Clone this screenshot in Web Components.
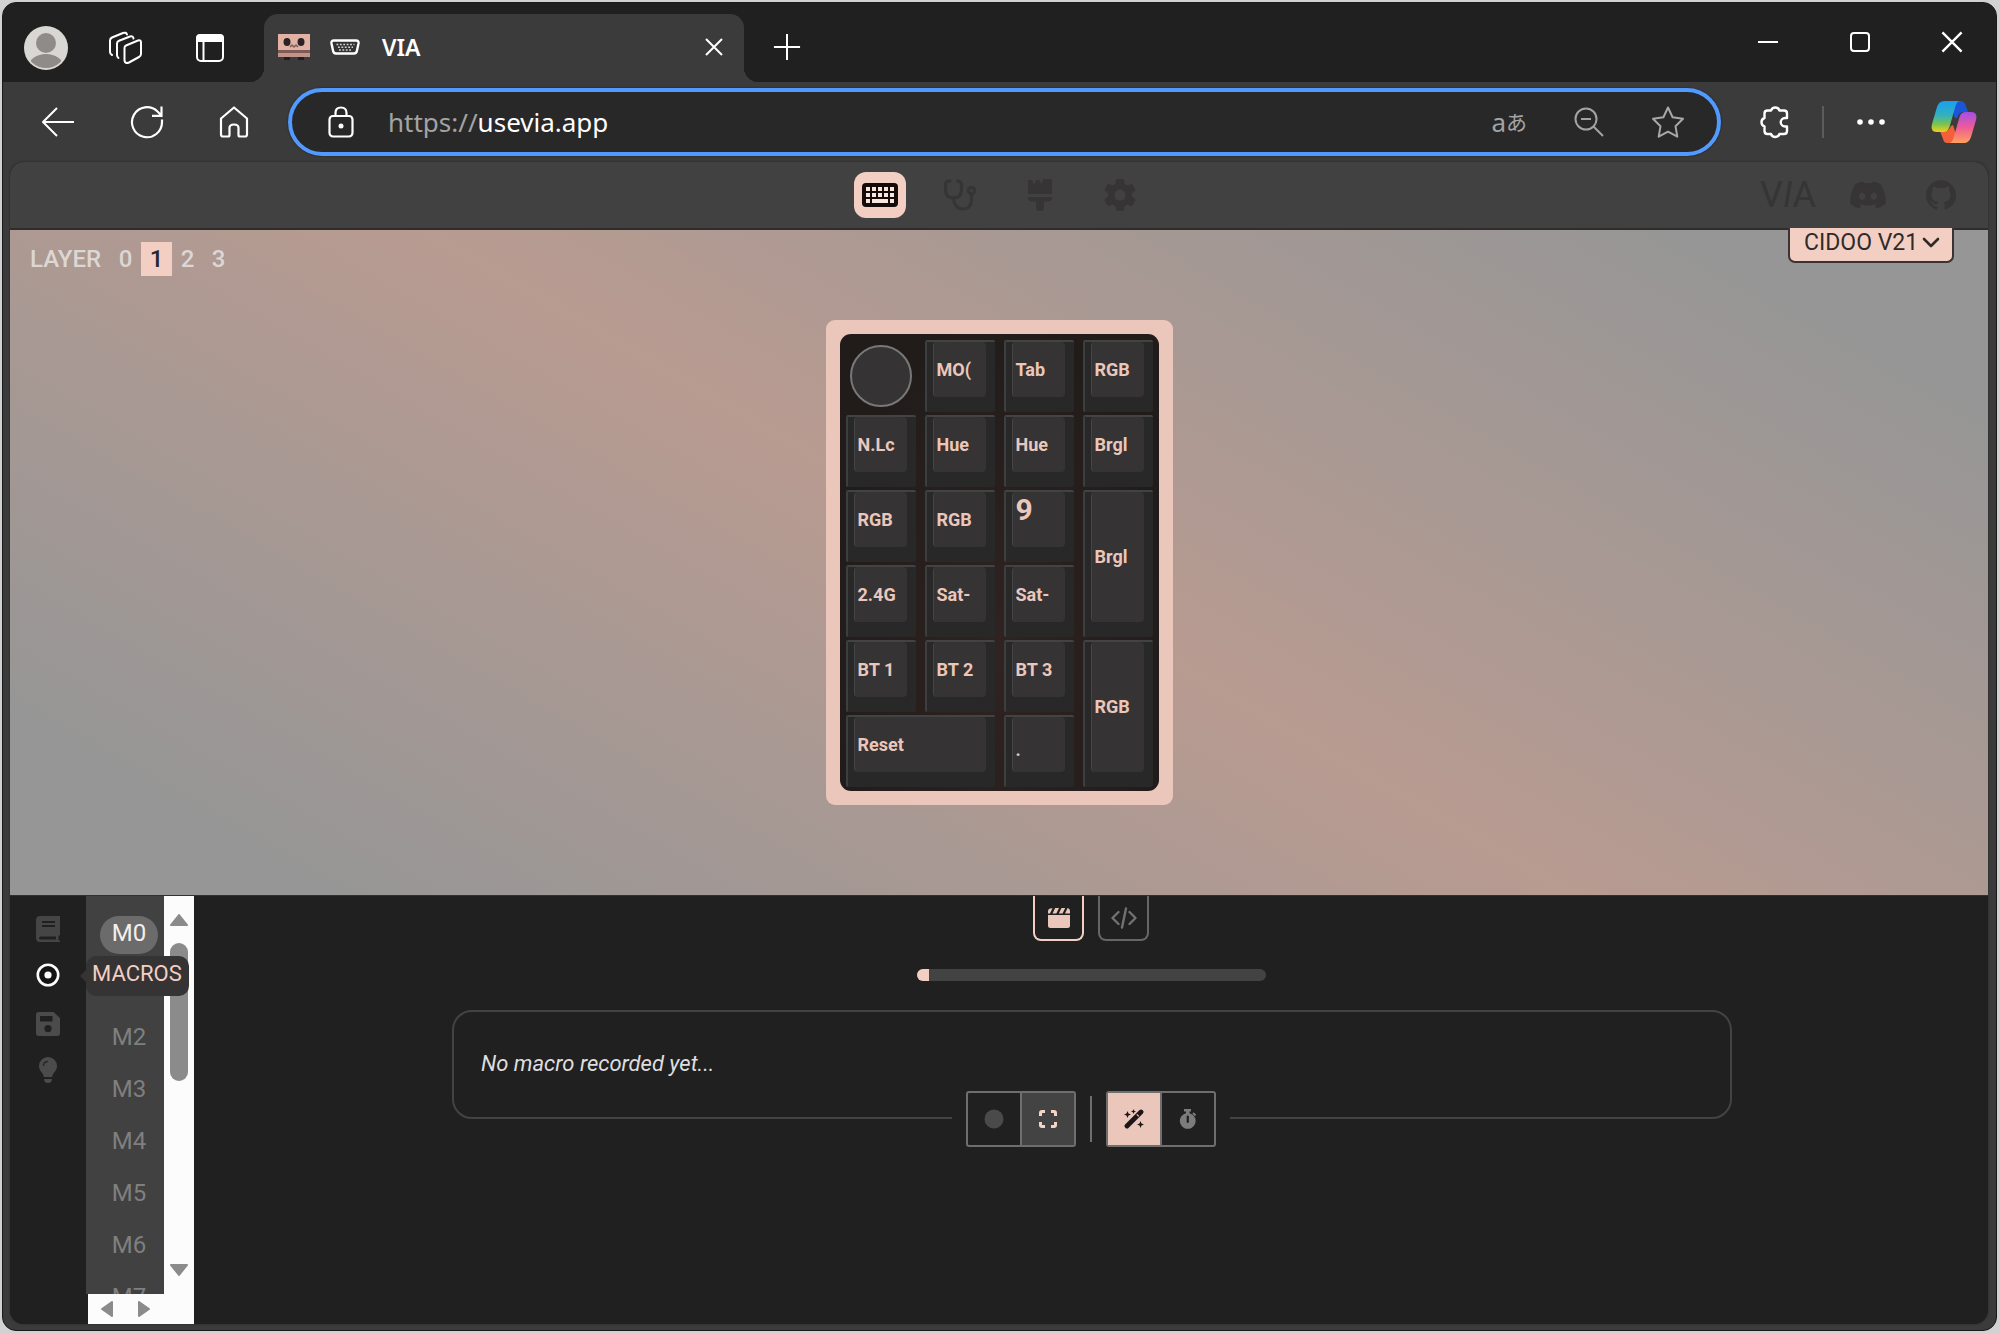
<!DOCTYPE html>
<html lang="en">
<head>
<meta charset="utf-8">
<title>VIA</title>
<style>
  html, body { height: 100%; margin: 0; background: #d2d2d2; }
  body {
    box-sizing: border-box; padding: 2px 3px 3px 2px;
    font-family: Roboto, "Noto Sans", "Noto Sans CJK JP", sans-serif;
    font-size: 24px; line-height: 28px; color: #fff;
    --accent: #ebc7bb; --accent-hi: #f3cfc3; --panel: #414141; --deep: #202020; --dim: #363435;
  }
</style>
</head>
<body>
<browser-window>
  <tab-strip slot="tabs"></tab-strip>
  <address-row slot="address"></address-row>
  <via-app>
    <via-header slot="header"></via-header>
    <keyboard-stage slot="stage"></keyboard-stage>
    <rail-menu slot="panel"></rail-menu>
    <macro-list slot="panel"></macro-list>
    <macro-editor slot="panel"></macro-editor>
  </via-app>
</browser-window>

<script>
const ICONS = {
  avatar: ['0 0 44 44', '<circle cx="22" cy="22" r="22" fill="#d9d7d3"/><clipPath id="a"><circle cx="22" cy="22" r="20"/></clipPath><g fill="#8f8b88" clip-path="url(#a)"><circle cx="22" cy="17" r="10"/><ellipse cx="22" cy="40" rx="17" ry="12"/></g>'],
  workspaces: ['0 0 34 34', '<g fill="none" stroke="#fff" stroke-width="2" stroke-linejoin="round" stroke-linecap="round"><path d="M17 14.500L29 9.500Q32 8.500 32 11.500V23Q32 25 30 26L20 31.500Q16 33 15.500 29.500V17Q15.500 15 17 14.500Z"/><path d="M9.500 27Q8 26 8 24V12.500Q8 10.500 10 9.800L21 5.500Q24 4.500 24.500 7.500"/><path d="M3 24Q1 23 1 21V9.500Q1 7.500 3 6.500L14 2Q17 .800 18 3.500"/></g>'],
  verticalTabs: ['0 0 30 30', '<rect x="2" y="2" width="26" height="26" rx="4" fill="none" stroke="#fff" stroke-width="2"/><path d="M1 9V5Q1 1 5 1H25Q29 1 29 5V9Z" fill="#fff"/><path d="M8.500 9V28" stroke="#fff" stroke-width="2"/>'],
  favicon: ['0 0 32 26', '<rect width="32" height="17" fill="#e3b2a5"/><rect y="16" width="32" height="7" fill="#7d5a58"/><rect x="0" y="19" width="32" height="4" fill="#c39288"/><ellipse cx="9" cy="8" rx="3.500" ry="4" fill="#2a2224"/><ellipse cx="23" cy="8" rx="3.500" ry="4" fill="#2a2224"/><path d="M12 13L14 11L16 13L18 11L20 13" fill="none" stroke="#80605a" stroke-width="1.500"/><path d="M6 23H12V26H6ZM20 23H26V26H20Z" fill="#211c1e"/>'],
  port: ['0 0 30 16', '<path d="M4 1.500H26Q29 1.500 28.500 4.500L27 11.500Q26.500 14.500 24 14.500H6Q3.500 14.500 3 11.500L1.500 4.500Q1 1.500 4 1.500Z" fill="#333" stroke="#fff" stroke-width="2.400"/><path d="M6.500 5.500H24.500M8 8.200H23M9 11H22" stroke="#d5d5d5" stroke-width="1.500" stroke-dasharray="1.800 1.600"/>'],
  close: ['0 0 20 20', '<path d="M2 2L18 18M18 2L2 18" stroke="#fff" stroke-width="2"/>'],
  plus: ['0 0 30 30', '<path d="M15 1V29M1 15H29" stroke="#fff" stroke-width="2.200"/>'],
  minimise: ['0 0 24 24', '<path d="M2 12H22" stroke="#fff" stroke-width="2"/>'],
  maximise: ['0 0 24 24', '<rect x="3" y="3" width="18" height="18" rx="3" fill="none" stroke="#fff" stroke-width="2"/>'],
  back: ['0 0 34 30', '<path d="M33 15H2M16 1L2 15L16 29" fill="none" stroke="#fff" stroke-width="2" stroke-linejoin="round"/>'],
  reload: ['0 0 34 34', '<path d="M32 14.500V17A15 15 0 1 1 27.500 6.500L31.500 10.500M31.500 1.500V10.800H22" fill="none" stroke="#fff" stroke-width="2.200"/>'],
  home: ['0 0 30 32', '<path d="M2 12.500L15 1.500L28 12.500V28.500Q28 30.500 26 30.500H21Q19.500 30.500 19.500 29V22Q19.500 18.500 15 18.500T10.500 22V29Q10.500 30.500 9 30.500H4Q2 30.500 2 28.500Z" fill="none" stroke="#fff" stroke-width="2.200" stroke-linejoin="round"/>'],
  lock: ['0 0 26 32', '<rect x="1.500" y="10" width="23" height="20.500" rx="3.500" fill="none" stroke="#fff" stroke-width="2.200"/><path d="M7.500 10V7Q7.500 1.500 13 1.500T18.500 7V10" fill="none" stroke="#fff" stroke-width="2.200"/><circle cx="13" cy="20" r="2.500" fill="#fff"/>'],
  zoomOut: ['0 0 30 30', '<g fill="none" stroke="#a3a3a3" stroke-width="2"><circle cx="12" cy="12" r="10.500"/><path d="M19.500 19.500L29 29M7 12H17"/></g>'],
  star: ['0 0 34 34', '<path d="M17 2.500L21.600 12.200L32 13.700L24.500 21.200L26.300 31.700L17 26.700L7.700 31.700L9.500 21.200L2 13.700L12.400 12.200Z" fill="none" stroke="#a8a8a8" stroke-width="2" stroke-linejoin="round"/>'],
  puzzle: ['0 0 32 34', '<path d="M12 5.500A4.500 4.500 0 0 1 20.500 5.500H25Q28 5.500 28 8.500V13H26A4.200 4.200 0 0 0 26 21.500H28V26Q28 29 25 29H20.500A4.500 4.500 0 0 1 12 29H8.500Q5.500 29 5.500 26V21.500A4.500 4.500 0 0 1 5.500 13V8.500Q5.500 5.500 8.500 5.500Z" fill="none" stroke="#fff" stroke-width="2.400" stroke-linejoin="round"/>'],
  more: ['0 0 28 6', '<g fill="#fff"><circle cx="3" cy="3" r="2.800"/><circle cx="14" cy="3" r="2.800"/><circle cx="25" cy="3" r="2.800"/></g>'],
  copilot: ['0 0 46 44', '<defs><linearGradient id="b" x2="0" y2="1"><stop stop-color="#1b9ff0"/><stop offset=".45" stop-color="#31b0c0"/><stop offset=".75" stop-color="#7cc250"/><stop offset="1" stop-color="#f3d018"/></linearGradient><linearGradient id="c" x2="0" y2="1"><stop stop-color="#a44dea"/><stop offset=".5" stop-color="#ee5c96"/><stop offset="1" stop-color="#ffa05c"/></linearGradient></defs><path d="M24 1H30Q33 1 34.500 5L37 12H32Q28 12 26 18L24 18L20 6Z" fill="#1c56d8"/><path d="M22 43H16Q13 43 12 39L9 31H14Q18 31 20 26L22 25L26 38Z" fill="#f2603c"/><path d="M13 1H29Q26 1 24.500 6L18.500 27Q17 32 12 32H6Q-1 32 1 24L6 7Q8 1 13 1Z" fill="url(#b)"/><path d="M33 43H18Q21 43 22.500 38L28.500 17Q30 12 35 12H40Q47 12 45 20L40 37Q38 43 33 43Z" fill="url(#c)"/>'],
  keyboard: ['0 0 36 24', '<rect width="36" height="24" rx="4" fill="#150b0a"/><path d="M4 6H8M10 6H14M16 6H20M22 6H26M28 6H32M4 12H8M10 12H14M16 12H20M22 12H26M28 12H32M4 18H8M10 18H26M28 18H32" stroke="#fbe6de" stroke-width="4"/>'],
  stethoscope: ['0 0 34 32', '<g fill="none" stroke="currentColor" stroke-width="3.200" stroke-linecap="round"><path d="M7 2Q2.500 2 2.500 6V10Q2.500 19 10.500 19T18.500 10V6Q18.500 2 14.500 2"/><path d="M10.500 19V20Q12 30 20 30T28.500 21V15"/><circle cx="28.500" cy="11.500" r="3.200"/></g>'],
  brush: ['0 0 24 32', '<path d="M0 1H4L6 6L8 1H11L13.500 5L15.500 0H22Q24 0 24 2V15H0ZM0 18H24V19Q24 22.500 20 22.500H16V28.500Q16 32 12 32T8 28.500V22.500H4Q0 22.500 0 19Z" fill="currentColor"/>'],
  gear: ['2 2 20 20', '<path fill="currentColor" d="M19.430 12.980c.04-.32.07-.64.07-.98s-.03-.66-.07-.98l2.110-1.650c.19-.15.24-.42.12-.64l-2-3.460c-.12-.22-.39-.3-.61-.22l-2.490 1c-.52-.4-1.080-.73-1.690-.98l-.38-2.650C14.460 2.180 14.250 2 14 2h-4c-.25 0-.46.18-.49.42l-.38 2.650c-.61.25-1.170.59-1.690.98l-2.490-1c-.23-.09-.49 0-.61.22l-2 3.460c-.13.22-.07.49.12.64l2.110 1.650c-.04.32-.07.65-.07.98s.03.66.07.98l-2.110 1.650c-.19.15-.24.42-.12.64l2 3.460c.12.22.39.3.61.22l2.490-1c.52.4 1.080.73 1.690.98l.38 2.650c.03.24.24.42.49.42h4c.25 0 .46-.18.49-.42l.38-2.650c.61-.25 1.170-.59 1.690-.98l2.490 1c.23.09.49 0 .61-.22l2-3.460c.12-.22.07-.49-.12-.64l-2.110-1.650zM12 15.500c-1.930 0-3.500-1.570-3.500-3.500s1.570-3.500 3.500-3.500 3.500 1.570 3.500 3.500-1.570 3.500-3.500 3.500z"/>'],
  discord: ['0 2.500 24 19', '<path fill="currentColor" d="M20.317 4.370a19.791 19.791 0 00-4.885-1.515.074.074 0 00-.079.037c-.211.375-.445.865-.608 1.250-1.845-.276-3.680-.276-5.487 0-.164-.393-.406-.874-.618-1.250a.077.077 0 00-.079-.037 19.736 19.736 0 00-4.885 1.515.070.070 0 00-.032.028C.533 9.046-.319 13.580.099 18.058a.082.082 0 00.031.056c2.053 1.508 4.041 2.423 5.993 3.029a.078.078 0 00.084-.028c.462-.630.873-1.295 1.226-1.994a.076.076 0 00-.042-.106c-.653-.248-1.274-.550-1.872-.892a.077.077 0 01-.008-.128c.126-.094.252-.192.372-.291a.074.074 0 01.078-.011c3.928 1.793 8.180 1.793 12.061 0a.074.074 0 01.079.010c.120.099.246.198.373.292a.077.077 0 01-.007.128 12.299 12.299 0 01-1.873.891.077.077 0 00-.041.107c.360.698.772 1.363 1.225 1.993a.076.076 0 00.084.029c1.961-.607 3.950-1.522 6.002-3.029a.077.077 0 00.031-.055c.500-5.177-.838-9.674-3.549-13.660a.061.061 0 00-.031-.029zM8.020 15.331c-1.183 0-2.157-1.086-2.157-2.419 0-1.333.956-2.419 2.157-2.419 1.211 0 2.176 1.095 2.157 2.419 0 1.333-.956 2.419-2.157 2.419zm7.975 0c-1.183 0-2.157-1.086-2.157-2.419 0-1.333.955-2.419 2.157-2.419 1.211 0 2.176 1.095 2.157 2.419 0 1.333-.946 2.419-2.157 2.419z"/>'],
  github: ['0 0 24 24', '<path fill="currentColor" d="M12 .297c-6.630 0-12 5.373-12 12 0 5.303 3.438 9.800 8.205 11.385.6.113.82-.258.82-.577 0-.285-.01-1.040-.015-2.040-3.338.724-4.042-1.610-4.042-1.610C4.422 18.070 3.633 17.700 3.633 17.700c-1.087-.744.084-.729.084-.729 1.205.084 1.838 1.236 1.838 1.236 1.070 1.835 2.809 1.305 3.495.998.108-.776.417-1.305.76-1.605-2.665-.3-5.466-1.332-5.466-5.930 0-1.310.465-2.380 1.235-3.220-.135-.303-.54-1.523.105-3.176 0 0 1.005-.322 3.300 1.230.96-.267 1.980-.399 3-.405 1.020.006 2.040.138 3 .405 2.280-1.552 3.285-1.230 3.285-1.230.645 1.653.24 2.873.12 3.176.765.84 1.230 1.910 1.230 3.220 0 4.610-2.805 5.625-5.475 5.920.42.36.81 1.096.81 2.220 0 1.606-.015 2.896-.015 3.286 0 .315.21.69.825.57C20.565 22.092 24 17.592 24 12.297c0-6.627-5.373-12-12-12"/>'],
  chevron: ['0 0 18 11', '<path d="M2 2L9 9L16 2" fill="none" stroke="#302a2b" stroke-width="2.600" stroke-linecap="round" stroke-linejoin="round"/>'],
  book: ['0 0 24 26', '<path fill="#454545" fill-rule="evenodd" d="M4 0H24V19L22.500 20V24L24 25V26H4Q0 26 0 22V4Q0 0 4 0ZM6 5V7H19V5ZM6 9V11H19V9ZM5 20.500Q3 20.500 3 22T5 23.500H20V20.500Z"/>'],
  record: ['0 0 24 24', '<circle cx="12" cy="12" r="10.200" fill="#141414" stroke="#fff" stroke-width="2.600"/><circle cx="12" cy="12" r="3.600" fill="#fff"/>'],
  save: ['0 0 24 24', '<path fill="#4b4b4b" fill-rule="evenodd" d="M3 0H17.500L24 6V21Q24 24 21 24H3Q0 24 0 21V3Q0 0 3 0ZM4 4V9.500H16.500V4ZM12 13A3.600 3.600 0 1 0 12 20.200A3.600 3.600 0 1 0 12 13Z"/>'],
  bulb: ['0 0 18 26', '<path fill="#4b4b4b" d="M9 0A9 9 0 0 1 18 9C18 14 14 15.500 13 20H5C4 15.500 0 14 0 9A9 9 0 0 1 9 0ZM5 22H13Q13 26 9 26T5 22Z"/><path d="M4.500 9Q4.500 4.500 9 4.500" fill="none" stroke="#2a2a2a" stroke-width="1.600"/>'],
  clapper: ['0 0 22 20', '<path d="M0 7H22V17.500Q22 20 19.500 20H2.500Q0 20 0 17.500Z" fill="#ebc7bb"/><path d="M0 5.500V3Q0 1 2 .5L4.500 .2L2 5.500ZM4.500 5.500L7.200 0H11L8.300 5.500ZM10.800 5.500L13.500 0H17.200L14.500 5.500ZM17 5.500L19.600 0Q22 .5 22 3V5.500Z" fill="#ebc7bb"/>'],
  code: ['0 0 26 22', '<path d="M7.500 5L1.500 11L7.500 17M18.500 5L24.500 11L18.500 17M15 1.500L11 20.500" fill="none" stroke="#717171" stroke-width="2.400" stroke-linecap="round" stroke-linejoin="round"/>'],
  dot: ['0 0 20 20', '<circle cx="10" cy="10" r="9.500" fill="#4a4a4a"/>'],
  expand: ['0 0 18 18', '<path d="M1.500 6V3Q1.500 1.500 3 1.500H6M12 1.500H15Q16.500 1.500 16.500 3V6M16.500 12V15Q16.500 16.500 15 16.500H12M6 16.500H3Q1.500 16.500 1.500 15V12" fill="none" stroke="#f6d3c7" stroke-width="3"/>'],
  wand: ['0 0 20 20', '<path d="M3 17L17 3" stroke="#1d1517" stroke-width="4.800" stroke-linecap="round"/><path d="M12.800 5.400L14.800 7.400" stroke="#ebc7bb" stroke-width="1.200"/><path d="M3.500 2L4.500 4.500L7 5.500L4.500 6.500L3.500 9L2.500 6.500L0 5.500L2.500 4.500ZM9.500 0L10.200 1.800L12 2.500L10.200 3.200L9.500 5L8.800 3.200L7 2.500L8.800 1.800ZM16.500 12L17.500 14.500L20 15.500L17.500 16.500L16.500 19L15.500 16.500L13 15.500L15.500 14.500Z" fill="#1d1517"/>'],
  timer: ['0 0 18 20', '<path d="M5 0H12V2.500H10.500V4.200A7.900 7.900 0 1 1 7 4.200V2.500H5Z" fill="#7c7c7c"/><path d="M14 4L16.500 6.500" stroke="#7c7c7c" stroke-width="2"/><path d="M8.800 7.500V13" stroke="#202020" stroke-width="2.200" stroke-linecap="round"/>'],
  up: ['0 0 18 12', '<path d="M9 1L17 11H1Z" fill="#8b8b8b" stroke="#8b8b8b" stroke-width="2" stroke-linejoin="round"/>'],
  down: ['0 0 18 12', '<path d="M9 11L17 1H1Z" fill="#8b8b8b" stroke="#8b8b8b" stroke-width="2" stroke-linejoin="round"/>'],
  left: ['0 0 12 16', '<path d="M1 8L11 1V15Z" fill="#8b8b8b" stroke="#8b8b8b" stroke-width="2" stroke-linejoin="round"/>'],
  right: ['0 0 12 16', '<path d="M11 8L1 1V15Z" fill="#8b8b8b" stroke="#8b8b8b" stroke-width="2" stroke-linejoin="round"/>']
};

const RESET = `
  :host { box-sizing: border-box; }
  * { box-sizing: border-box; }
  button { appearance: none; border: 0; padding: 0; margin: 0; background: none; color: inherit; font: inherit; display: flex; align-items: center; justify-content: center; }
  a { color: inherit; text-decoration: none; display: flex; align-items: center; }
`;

function define(name, css, html) {
  customElements.define(name, class extends HTMLElement {
    constructor() {
      super();
      const markup = typeof html === 'function' ? html(this) : html;
      this.attachShadow({ mode: 'open' }).innerHTML = `<style>${RESET}${css}</style>${markup}`;
    }
  });
}

define('ui-icon', ':host { display: block; flex: none; } svg { display: block; }', el => {
  const [box, body] = ICONS[el.getAttribute('name')];
  return `<svg viewBox="${box}" width="${el.getAttribute('w')}" height="${el.getAttribute('h')}" aria-hidden="true">${body}</svg>`;
});

const icon = (name, w, h) => `<ui-icon name="${name}" w="${w}" h="${h}"></ui-icon>`;

define('browser-window', `
  :host { display: flex; flex-direction: column; height: 100%; background: #3b3b3b; border-radius: 14px; overflow: hidden; border: 1px solid #1a1a1a; }
`, '<slot name="tabs"></slot><slot name="address"></slot><slot></slot>');

define('tab-strip', `
  :host { display: flex; align-items: stretch; height: 79px; background: var(--deep); flex: none; }
  .tools { display: flex; align-items: center; padding: 10px 39px 0 21px; }
  .tools button { margin-right: 41px; }
  .tools button + button { margin-right: 52px; }
  .tools button + button + button { margin-right: 0; }
  .tab { width: 480px; margin-top: 11px; background: #3b3b3b; border-radius: 14px 14px 0 0; display: flex; align-items: center; padding: 0 20px 2px 14px; position: relative; }
  .tab::before, .tab::after { content: ""; position: absolute; bottom: 0; width: 14px; height: 14px; }
  .tab::before { right: 100%; background: radial-gradient(circle at 0 0, transparent 14px, #3b3b3b 14px); }
  .tab::after { left: 100%; background: radial-gradient(circle at 100% 0, transparent 14px, #3b3b3b 14px); }
  .tab ui-icon + ui-icon { margin: 0 22px 0 20px; }
  .title { flex: 1; font: 600 23px/30px "Noto Sans", sans-serif; }
  .new { padding: 8px 0 0 29px; }
  .win { margin-left: auto; display: flex; gap: 68px; padding: 0 32px 2px 0; }
`, `
  <div class="tools">
    <button aria-label="Profile">${icon('avatar', 44, 44)}</button>
    <button aria-label="Workspaces">${icon('workspaces', 34, 34)}</button>
    <button aria-label="Tab actions">${icon('verticalTabs', 30, 30)}</button>
  </div>
  <div class="tab">${icon('favicon', 32, 26)}${icon('port', 30, 16)}<span class="title">VIA</span><button aria-label="Close tab">${icon('close', 20, 20)}</button></div>
  <button class="new" aria-label="New tab">${icon('plus', 28, 28)}</button>
  <div class="win">
    <button aria-label="Minimise">${icon('minimise', 24, 24)}</button>
    <button aria-label="Maximise">${icon('maximise', 24, 24)}</button>
    <button aria-label="Close">${icon('close', 24, 24)}</button>
  </div>
`);

define('address-row', `
  :host { display: flex; align-items: center; height: 80px; padding: 0 19px 0 38px; flex: none; }
  .nav { display: flex; gap: 55px; margin-right: 39px; }
  .bar { flex: 1; height: 68px; border: 4px solid #519aff; border-radius: 34px; background: #282828; display: flex; align-items: center; padding: 0 32px 0 36px; color: #a3a3a3; font: 26px/34px "Noto Sans", "Noto Sans CJK JP", sans-serif; box-shadow: 0 0 2px #251d10; }
  label { margin-left: 34px; }
  input { flex: 1; min-width: 0; border: 0; outline: 0; padding: 0; background: none; color: #fff; font: inherit; }
  .acts { display: flex; gap: 47px; align-items: center; }
  .tr { font-size: 26px; }
  .tr small { font-size: 21px; }
  .ext { margin-left: 38px; }
  .sep { width: 2px; height: 32px; background: #5c5c5c; margin: 0 33px 0 31px; }
  .cop { margin-left: 46px; }
`, `
  <div class="nav">
    <button aria-label="Back">${icon('back', 34, 30)}</button>
    <button aria-label="Reload">${icon('reload', 34, 34)}</button>
    <button aria-label="Home">${icon('home', 30, 32)}</button>
  </div>
  <div class="bar">
    ${icon('lock', 26, 32)}
    <label for="url">https://</label><input id="url" value="usevia.app" spellcheck="false">
    <div class="acts">
      <button class="tr" aria-label="Translate">a<small>あ</small></button>
      <button aria-label="Zoom out">${icon('zoomOut', 30, 30)}</button>
      <button aria-label="Add to favourites">${icon('star', 34, 34)}</button>
    </div>
  </div>
  <button class="ext" aria-label="Extensions">${icon('puzzle', 32, 34)}</button>
  <span class="sep"></span>
  <button aria-label="More">${icon('more', 28, 6)}</button>
  <button class="cop" aria-label="Copilot">${icon('copilot', 46, 44)}</button>
`);

define('via-app', `
  :host { display: flex; flex-direction: column; flex: 1; min-height: 0; margin: 0 8px 6px 7px; border-radius: 14px; overflow: hidden; background: var(--deep); box-shadow: 0 0 2px #222; }
  .panel { display: flex; flex: 1; min-height: 0; border-top: 1px solid #303030; }
`, '<slot name="header"></slot><slot name="stage"></slot><div class="panel"><slot name="panel"></slot></div>');

define('via-header', `
  :host { display: grid; grid-template-columns: 1fr auto 1fr; align-items: center; height: 68px; padding-right: 32px; background: var(--panel); border-bottom: 2px solid #302c2b; color: var(--dim); flex: none; }
  nav { grid-column: 2; display: flex; gap: 28px; padding-left: 34px; }
  nav button { width: 52px; height: 46px; border-radius: 12px; }
  .on { background: var(--accent-hi); }
  .links { justify-self: end; display: flex; align-items: center; gap: 40px; }
  .logo { font-size: 36px; line-height: 36px; margin-right: -6px; }
`, `
  <nav>
    <button class="on" aria-label="Configure">${icon('keyboard', 36, 24)}</button>
    <button aria-label="Key tester">${icon('stethoscope', 34, 32)}</button>
    <button aria-label="Design">${icon('brush', 24, 32)}</button>
    <button aria-label="Settings">${icon('gear', 32, 32)}</button>
  </nav>
  <div class="links">
    <a class="logo" href="#via">V<i>I</i>A</a>
    <a href="#discord" aria-label="Discord">${icon('discord', 36, 28)}</a>
    <a href="#github" aria-label="GitHub">${icon('github', 30, 30)}</a>
  </div>
`);

define('key-cap', `
  :host { display: block; padding: 0 9px 15px 6px; background: #282828; border-top: 2px solid #424444; border-left: 2px solid #3c3f3f; border-radius: 2px; color: var(--accent); font-size: 18px; line-height: 24px; font-weight: 700; min-width: 0; }
  :host([wide]) { grid-column: span 2; }
  :host([tall]) { grid-row: span 2; }
  button { width: 100%; height: 100%; background: #353334; border-radius: 4px; border-left: 1px solid #454545; padding-left: 3px; justify-content: flex-start; overflow: hidden; white-space: nowrap; }
  :host([big]) button { font-size: 30px; align-items: flex-start; line-height: 36px; }
  :host([low]) button { align-items: flex-end; padding-bottom: 10px; }
`, '<button><slot></slot></button>');

define('keyboard-stage', `
  :host { display: grid; grid-template-columns: 1fr auto 1fr; align-items: start; flex: none; background: linear-gradient(30deg, #969696 10%, #b89b91 50%, #969696 90%); }
  .layers { display: flex; align-items: center; padding: 12px 0 0 20px; color: #dcd7d4; height: 46px; font-weight: 500; }
  .layers span { margin-right: 9px; }
  .layers button { width: 31px; height: 34px; }
  .layers .on { background: var(--accent-hi); color: #2b2526; }
  .case { margin: 90px 0; padding: 14px; border-radius: 9px; background: var(--accent); }
  .plate { display: grid; grid-template-columns: repeat(4, 70px); grid-template-rows: repeat(6, 72px); gap: 3px 9px; padding: 6px 6px 4px 6px; border-radius: 11px; background: radial-gradient(ellipse at 50% 70%, #302321, #211c1a 75%); }
  .knob { width: 62px; height: 62px; border-radius: 50%; border: 2px solid #77787a; background: #353334; align-self: center; justify-self: center; }
  .device { justify-self: end; margin: -2px 34px 0 0; display: grid; align-items: center; }
  .device > * { grid-area: 1 / 1; }
  select { appearance: none; width: 166px; height: 35px; border: 2px solid #3a3233; border-top: 0; border-radius: 0 0 7px 7px; background: var(--accent-hi); color: #302a2b; font: inherit; font-size: 23px; line-height: 28px; padding: 0 0 4px 14px; margin: 0; }
  .device ui-icon { justify-self: end; margin: 0 14px 6px 0; pointer-events: none; }
`, `
  <div class="layers"><span>LAYER</span><button>0</button><button class="on">1</button><button>2</button><button>3</button></div>
  <div class="case"><div class="plate">
    <button class="knob" aria-label="Encoder"></button><key-cap>MO(</key-cap><key-cap>Tab</key-cap><key-cap>RGB</key-cap>
    <key-cap>N.Lc</key-cap><key-cap>Hue</key-cap><key-cap>Hue</key-cap><key-cap>Brgl</key-cap>
    <key-cap>RGB</key-cap><key-cap>RGB</key-cap><key-cap big>9</key-cap><key-cap tall>Brgl</key-cap>
    <key-cap>2.4G</key-cap><key-cap>Sat-</key-cap><key-cap>Sat-</key-cap>
    <key-cap>BT 1</key-cap><key-cap>BT 2</key-cap><key-cap>BT 3</key-cap><key-cap tall>RGB</key-cap>
    <key-cap wide>Reset</key-cap><key-cap low>.</key-cap>
  </div></div>
  <div class="device"><select aria-label="Keyboard"><option>CIDOO V21</option></select>${icon('chevron', 18, 11)}</div>
`);

define('rail-menu', `
  :host { display: block; width: 76px; padding-top: 10px; flex: none; background: var(--deep); position: relative; z-index: 1; }
  button { width: 100%; height: 46px; }
  .item { position: relative; margin-bottom: 3px; }
  .tip { position: absolute; left: 76px; top: 4px; height: 40px; padding: 0 7px 4px 6px; display: flex; align-items: center; border-radius: 10px; background: #353334; color: var(--accent-hi); font-size: 22px; }
  .tip::before { content: ""; position: absolute; right: 100%; top: 14px; border: 6px solid transparent; border-left-width: 0; border-right-color: #353334; }
`, `
  <button aria-label="Keymap">${icon('book', 24, 26)}</button>
  <div class="item"><button aria-label="Macros">${icon('record', 24, 24)}</button><span class="tip" role="tooltip">MACROS</span></div>
  <button aria-label="Save and load">${icon('save', 24, 24)}</button>
  <button aria-label="Lighting">${icon('bulb', 18, 26)}</button>
`);

define('macro-list', `
  :host { display: grid; grid-template-columns: 78px 30px; grid-template-rows: minmax(0, 1fr) 30px; flex: none; }
  .list { background: var(--panel); overflow: hidden; display: flex; flex-direction: column; gap: 14px; padding: 20px 0 0 14px; color: #7f7f7f; }
  .list button { width: 58px; height: 38px; border-radius: 19px; flex: none; padding-bottom: 4px; }
  .list .on { background: #6b6b6b; color: #f4efec; }
  .v, .h { background: #fcfcfc; display: flex; align-items: center; }
  .v { flex-direction: column; padding: 18px 0; }
  .thumb { width: 18px; height: 138px; border-radius: 9px; background: #8b8b8b; margin: 17px 0 auto; }
  .h { grid-column: 1 / 3; margin-left: 2px; gap: 25px; padding-left: 13px; }
`, `
  <div class="list"><button class="on">M0</button><button aria-label="M1"></button><button>M2</button><button>M3</button><button>M4</button><button>M5</button><button>M6</button><button>M7</button></div>
  <div class="v">${icon('up', 18, 12)}<div class="thumb"></div>${icon('down', 18, 12)}</div>
  <div class="h">${icon('left', 12, 16)}${icon('right', 12, 16)}</div>
`);

define('macro-editor', `
  :host { display: flex; flex-direction: column; align-items: center; flex: 1; }
  .modes { display: flex; gap: 14px; }
  .modes button { width: 51px; height: 45px; border: 2px solid #666; border-top: 0; border-radius: 0 0 8px 8px; }
  .modes .on { border-color: var(--accent-hi); }
  .bar { width: 349px; height: 12px; border-radius: 6px; background: #434343; margin-top: 28px; overflow: hidden; }
  .fill { width: 12px; height: 100%; background: var(--accent-hi); }
  .box { align-self: stretch; margin: 29px 256px 0 258px; border: 2px solid #434343; border-radius: 20px; padding: 38px 27px 39px; font-size: 22px; font-style: italic; color: #dedede; }
  .ctl { display: flex; align-items: center; gap: 14px; padding: 0 14px; margin-top: -28px; background: var(--deep); }
  .pair { display: flex; border: 2px solid #6e6e6e; border-radius: 3px; }
  .pair button { width: 52px; height: 52px; }
  .pair button + button { border-left: 2px solid #6e6e6e; width: 54px; }
  .grey { background: #434343; }
  .pink { background: var(--accent); }
  .sep { width: 2px; height: 46px; background: #6e6e6e; }
`, `
  <div class="modes"><button class="on" aria-label="Recorder">${icon('clapper', 22, 20)}</button><button aria-label="Script">${icon('code', 26, 22)}</button></div>
  <div class="bar" role="progressbar" aria-valuenow="3"><div class="fill"></div></div>
  <div class="box">No macro recorded yet...</div>
  <div class="ctl">
    <div class="pair"><button aria-label="Record">${icon('dot', 20, 20)}</button><button class="grey" aria-label="Fullscreen">${icon('expand', 18, 18)}</button></div>
    <span class="sep"></span>
    <div class="pair"><button class="pink" aria-label="Smart optimise">${icon('wand', 20, 20)}</button><button aria-label="Record delays">${icon('timer', 18, 20)}</button></div>
  </div>
`);
</script>
</body>
</html>
